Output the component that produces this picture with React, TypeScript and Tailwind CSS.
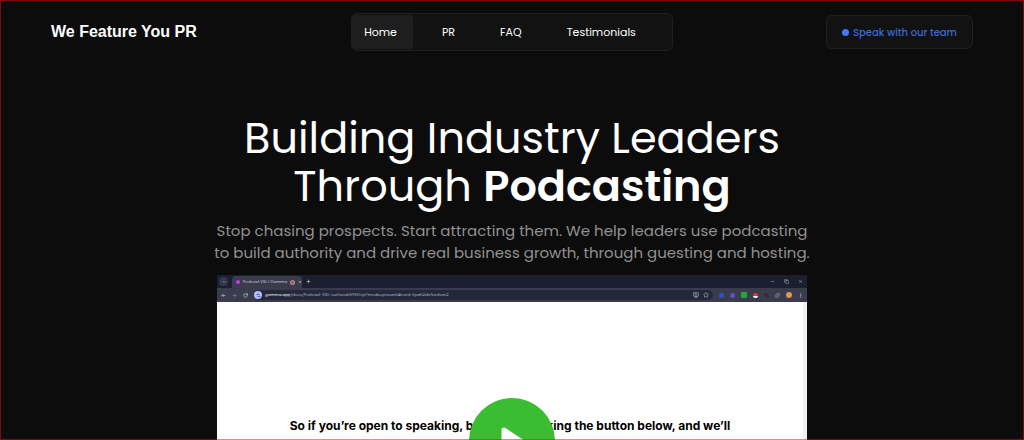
import React from "react";
import { ArrowLeft, ArrowRight, ChevronDown, Copy, Crop, Minus, MonitorUp, MoreVertical, Plus, Puzzle, RotateCw, Settings2, Star, Volume2, X } from "lucide-react";

const links = [
  { label: "PR", href: "#pr" },
  { label: "FAQ", href: "#faq" },
  { label: "Testimonials", href: "#testimonials" },
];

function Header() {
  return (
    <header className="grid grid-cols-[1fr_auto_1fr] items-center px-[51px] pt-[13px]">
      <a href="#top" className="justify-self-start font-['Liberation_Sans',sans-serif] text-base font-bold">
        We Feature You PR
      </a>
      <nav className="flex h-[38px] items-center gap-[45px] rounded-md border border-[#202020] bg-[#121212] pr-9 text-[11px]">
        <a href="#home" className="-mr-4 flex h-[34px] items-center rounded bg-[#1e1e1e] pr-4 pl-3">
          Home
        </a>
        {links.map((l) => (
          <a key={l.label} href={l.href}>
            {l.label}
          </a>
        ))}
      </nav>
      <a
        href="#contact"
        className="flex h-[34px] items-center gap-1 justify-self-end rounded-md border border-[#202020] bg-[#121212] px-[15px] text-[10px] font-medium text-[#3b69d9]"
      >
        <span className="size-[7px] rounded-full bg-[#3f78ff]" />
        Speak with our team
      </a>
    </header>
  );
}

function BrowserBar() {
  return (
    <div className="text-[4px] leading-none text-[#c9cad6]">
      <div className="flex h-[13px] items-center justify-between bg-[#1c1f30] px-1">
        <div className="flex h-full items-center gap-1">
          <span className="-ml-0.5 flex size-[9px] items-center justify-center rounded-sm bg-[#34364a]">
            <ChevronDown size={4} strokeWidth={3} />
          </span>
          <div className="mt-px flex h-3 w-[70px] items-center gap-[3px] rounded-t-sm bg-[#3a3c4d] px-1">
            <span className="size-1 shrink-0 rounded-full bg-[#c93be0]" />
            <span className="grow text-left whitespace-nowrap">Podcast VSL | Gamma</span>
            <span className="flex size-[5px] shrink-0 items-center justify-center rounded-full bg-[#b98b80] text-[#3a3c4d]">
              <Volume2 size={3} strokeWidth={3} />
            </span>
            <X size={4} strokeWidth={3} className="shrink-0" />
          </div>
          <Plus size={5} strokeWidth={3} />
        </div>
        <div className="flex items-center gap-[9px]">
          <Minus size={5} />
          <Copy size={5} />
          <X size={5} />
        </div>
      </div>
      <div className="flex h-[14px] items-center gap-[6px] bg-[#3a3c4d] px-1">
        <ArrowLeft size={5} strokeWidth={3} />
        <ArrowRight size={5} strokeWidth={3} className="text-[#85879a]" />
        <RotateCw size={5} strokeWidth={3} />
        <div className="flex h-[10px] grow items-center gap-[3px] rounded-full bg-[#25273b] pr-1">
          <span className="flex size-2 items-center justify-center rounded-full bg-[#b5c3ff] text-[#34479b]">
            <Settings2 size={5} />
          </span>
          <span className="grow text-left whitespace-nowrap text-[#b3b5c6]">
            <span className="text-white">gamma.app</span>/docs/Podcast-VSL-ou0acab5Y9l0cjz?mode=present#card-kpeh2xbr5xrdvxn2
          </span>
          <MonitorUp size={6} />
          <Star size={6} className="ml-px" />
        </div>
        <span className="size-[5px] rounded-full bg-[#2456c8]" />
        <span className="size-[5px] rounded-full bg-[#5656c4]" />
        <span className="size-[6px] rounded-[1px] bg-[#25a63a]" />
        <span className="size-[5px] rounded-full bg-linear-to-b from-[#e03a32] from-50% to-white to-50%" />
        <Crop size={5} className="text-[#181a28]" />
        <Puzzle size={5} />
        <span className="size-[6px] rounded-full bg-[#d99a58]" />
        <MoreVertical size={5} />
      </div>
    </div>
  );
}

function Video() {
  return (
    <div className="relative mx-auto mt-[11px] flex aspect-video w-full max-w-[590px] flex-col bg-white text-black">
      <BrowserBar />
      <div className="grow border-r-4 border-[#f1f1f1]">
        <p className="pt-[116px] text-center font-[Inter,sans-serif] text-xs leading-4 font-bold">
          So if you’re open to speaking, book it by clicking the button below, and we’ll
        </p>
      </div>
      <button
        aria-label="Play video"
        className="absolute top-1/2 left-1/2 size-[86px] -translate-1/2 rounded-full bg-[#3bbd33]"
      >
        <svg viewBox="0 0 86 86" className="size-full" aria-hidden="true">
          <path d="M35 32 L56 46 L35 59 Z" fill="#fff" stroke="#fff" strokeWidth="5" strokeLinejoin="round" />
        </svg>
      </button>
    </div>
  );
}

export default function App() {
  return (
    <div id="top" className="relative h-screen overflow-hidden bg-[#0c0c0c] font-[Poppins,Inter,sans-serif] text-white">
      <Header />
      <main className="px-6 pt-[63px] text-center">
        <h1 className="text-[43px] leading-[48px]">
          Building Industry Leaders
          <br />
          Through <strong className="font-semibold">Podcasting</strong>
        </h1>
        <p className="mt-[10px] text-[15px] leading-[22px] text-[#929292]">
          Stop chasing prospects. Start attracting them. We help leaders use podcasting
          <br />
          to build authority and drive real business growth, through guesting and hosting.
        </p>
        <Video />
      </main>
      <div className="pointer-events-none absolute inset-0 border border-[#ff0000]/50" />
    </div>
  );
}
